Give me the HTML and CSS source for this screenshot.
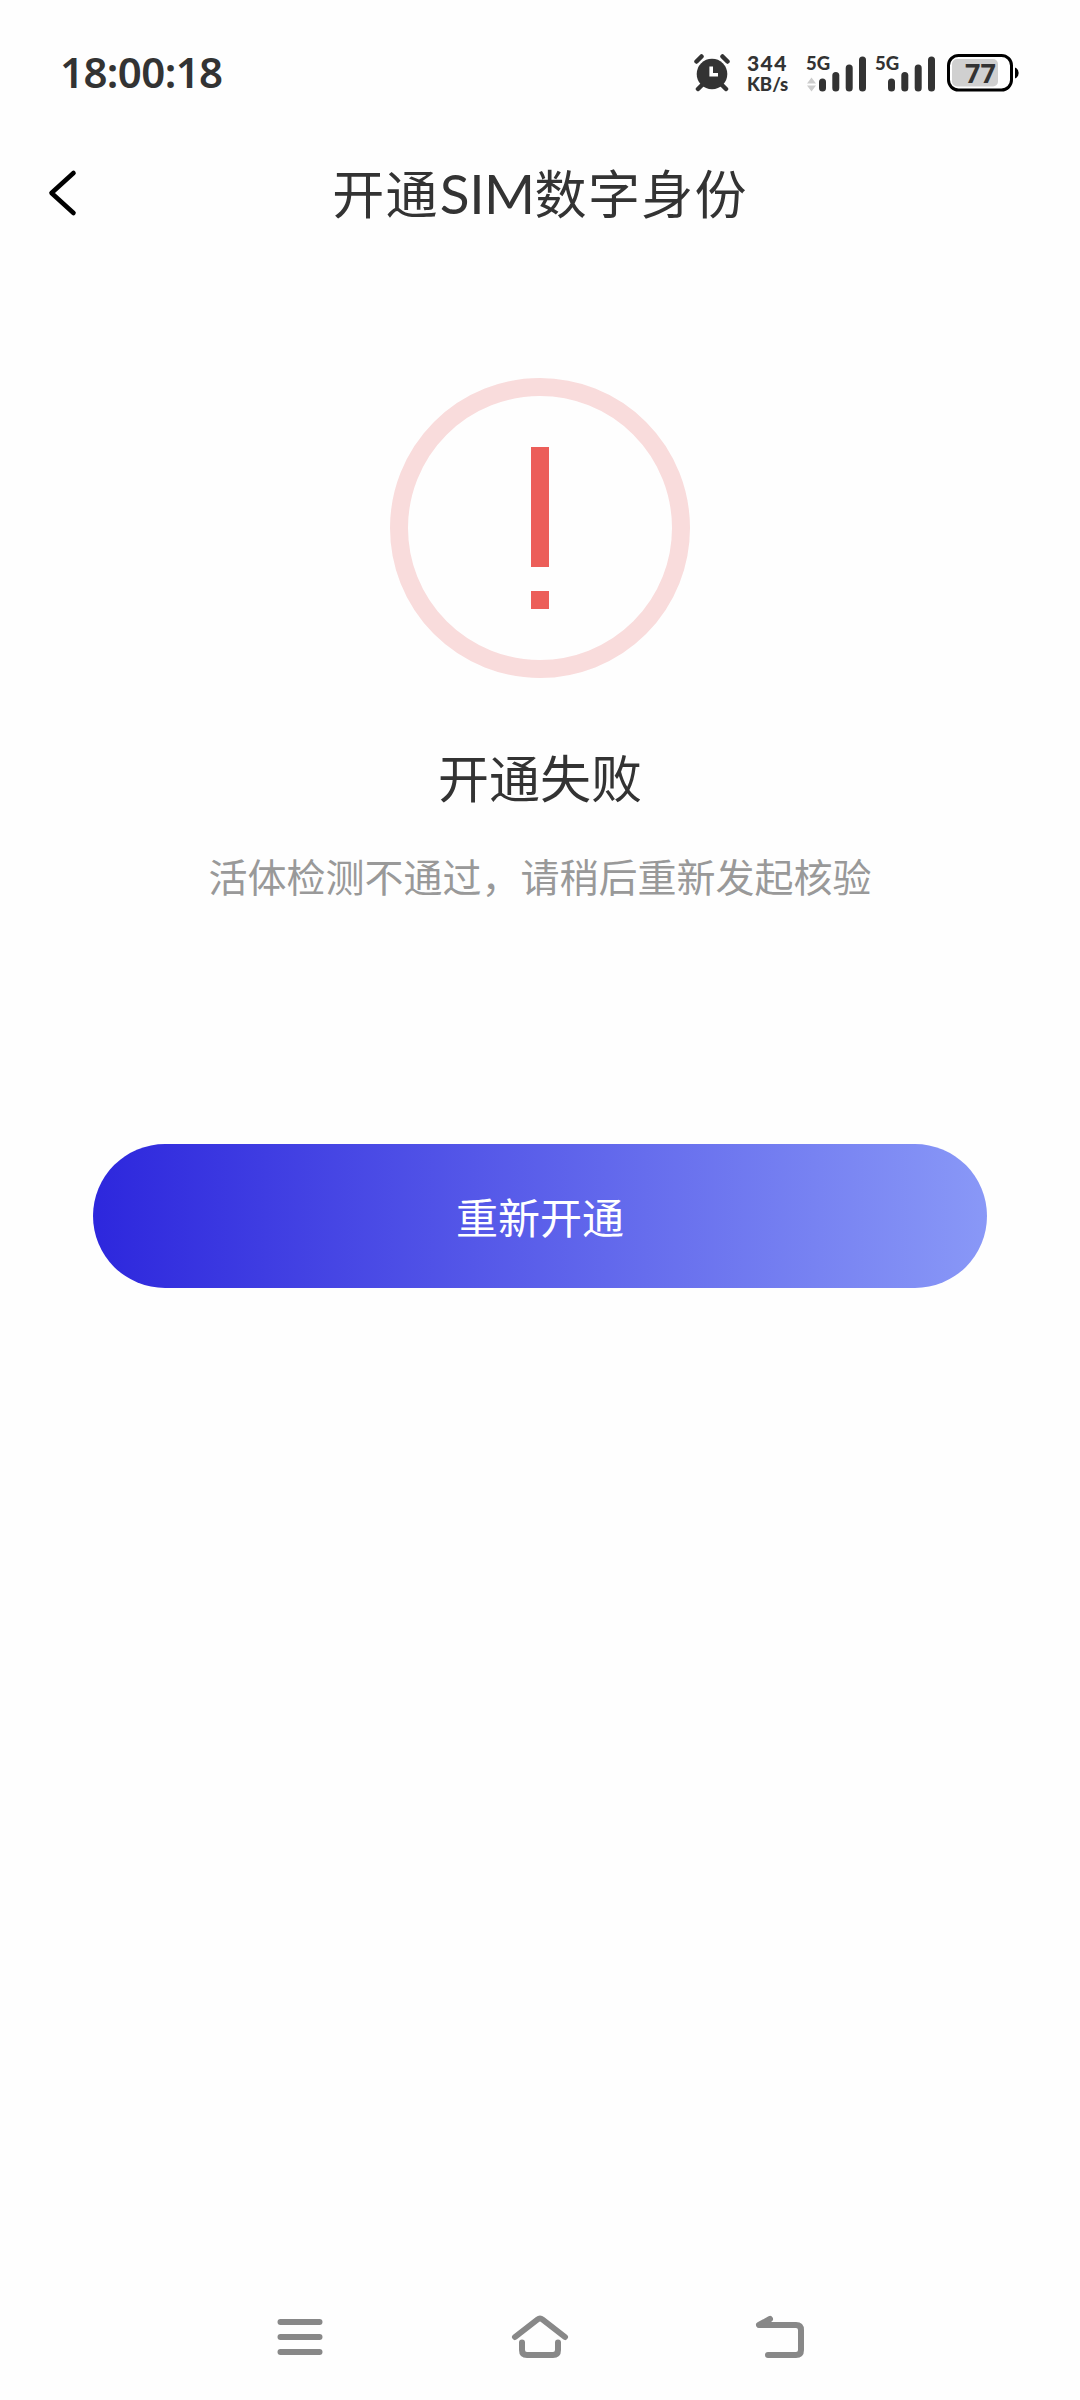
FILE: index.html
```
<!DOCTYPE html>
<html lang="zh-CN">
<head>
    <meta charset="UTF-8">
    <meta name="viewport" content="width=device-width, initial-scale=1.0">
    <title>开通SIM数字身份</title>
    <link rel="stylesheet" href="styles.css">
</head>
<body>
    <div class="status-bar">
        <div class="time">18:00:18</div>
        <div class="status-icons">
            <svg class="alarm" width="36" height="38" viewBox="0 0 36 38">
                <g stroke="#333" stroke-width="4.5" stroke-linecap="round">
                    <path d="M2.5 7.5L7.5 2.5M33.5 7.5L28.5 2.5M8 31L4 35M28 31L32 35"/>
                </g>
                <circle cx="18" cy="20" r="15.3" fill="#333"/>
                <path d="M17.2 12.5V20.8H24" fill="none" stroke="#fff" stroke-width="3.6"/>
            </svg>
            <div class="speed">
                <span class="speed-value">344</span>
                <span class="speed-unit">KB/s</span>
            </div>
            <div class="signal">
                <span class="network">5G</span>
                <svg width="60" height="38" viewBox="0 0 60 38">
                    <path d="M0 29.5L4.5 23.5L9 29.5ZM0 31.5L4.5 37.5L9 31.5Z" fill="#ccc"/>
                    <g fill="#333">
                        <rect x="12" y="24.5" width="7" height="13" rx="3.5"/>
                        <rect x="25.3" y="18" width="7" height="19.5" rx="3.5"/>
                        <rect x="38.7" y="10.5" width="7" height="27" rx="3.5"/>
                        <rect x="52" y="2.5" width="7" height="35" rx="3.5"/>
                    </g>
                </svg>
            </div>
            <div class="signal">
                <span class="network">5G</span>
                <svg width="60" height="38" viewBox="0 0 60 38">
                    <g fill="#333">
                        <rect x="12" y="24.5" width="7" height="13" rx="3.5"/>
                        <rect x="25.3" y="18" width="7" height="19.5" rx="3.5"/>
                        <rect x="38.7" y="10.5" width="7" height="27" rx="3.5"/>
                        <rect x="52" y="2.5" width="7" height="35" rx="3.5"/>
                    </g>
                </svg>
            </div>
            <div class="battery">
                <svg width="72" height="38" viewBox="0 0 72 38">
                    <rect x="1.5" y="1.5" width="63" height="34.5" rx="10" fill="#fff" stroke="#000" stroke-width="3"/>
                    <rect x="5" y="5" width="46" height="27.5" rx="5" fill="#d0d0d0"/>
                    <path d="M68 13.5Q71.7 15 71.7 19T68 24.5Z" fill="#000"/>
                </svg>
                <span class="battery-level">77</span>
            </div>
        </div>
    </div>

    <div class="header">
        <svg class="back" width="30" height="48" viewBox="0 0 30 48">
            <path d="M26.5 4L4.5 24L26.5 44" fill="none" stroke="#000" stroke-width="4.6" stroke-linecap="round" stroke-linejoin="round"/>
        </svg>
        <h1>开通<span class="latin">SIM</span>数字身份</h1>
    </div>

    <div class="result">
        <svg class="result-icon" width="300" height="300" viewBox="0 0 300 300">
            <circle cx="150" cy="150" r="141" fill="none" stroke="#f9dcdc" stroke-width="18"/>
            <rect x="141" y="69" width="18" height="120" fill="#ec5e59"/>
            <rect x="141" y="213" width="18" height="18" fill="#ec5e59"/>
        </svg>
        <h2>开通失败</h2>
        <p>活体检测不通过，请稍后重新发起核验</p>
        <button class="retry">重新开通</button>
    </div>

    <div class="nav-bar">
        <svg width="60" height="48" viewBox="0 0 60 48">
            <path d="M10.5 9H49.5M10.5 24H49.5M10.5 39H49.5"/>
        </svg>
        <svg width="60" height="48" viewBox="0 0 60 48">
            <path d="M5 24L27.5 6.5Q30 4.5 32.5 6.5L55 24M12 29.5V37Q12 42 17 42H43Q48 42 48 37V29.5"/>
        </svg>
        <svg width="60" height="48" viewBox="0 0 60 48">
            <path d="M20 6L9 12H46Q51 12 51 17V37Q51 42 46 42H18"/>
        </svg>
    </div>
</body>
</html>
```

FILE: styles.css
```
* {
    box-sizing: border-box;
}

body {
    margin: 0;
    height: 2400px;
    display: flex;
    flex-direction: column;
    background: #fefefe;
    color: #333;
    font-family: "Noto Sans CJK SC", sans-serif;
}

h1, h2, p {
    margin: 0;
    font-weight: 400;
}

svg {
    display: block;
}

.status-bar {
    height: 146px;
    padding: 0 61px 0 60px;
    display: flex;
    justify-content: space-between;
    align-items: center;
    font-family: Lato, "Noto Sans", sans-serif;
}

.time {
    padding-bottom: 2px;
    font-family: "Noto Sans", sans-serif;
    font-size: 42px;
    font-weight: 600;
    line-height: 60px;
    letter-spacing: -0.6px;
}

.status-icons {
    display: flex;
    height: 38px;
}

.alarm {
    margin-right: 17px;
}

.speed {
    width: 43px;
    margin-right: 17px;
    font-weight: 900;
    white-space: nowrap;
}

.speed span {
    display: block;
}

.speed-value {
    font-size: 21px;
    line-height: 17px;
    letter-spacing: 1.4px;
}

.speed-unit {
    margin-top: 3px;
    font-size: 18.5px;
    line-height: 20px;
}

.signal {
    position: relative;
    width: 60px;
    margin-right: 9px;
}

/* network label sits over the short bars */
.network {
    position: absolute;
    left: -1px;
    top: 0;
    font-size: 18.5px;
    font-weight: 900;
    line-height: 18px;
}

.battery {
    position: relative;
    margin-left: 2px;
}

.battery-level {
    position: absolute;
    left: 18px;
    top: 0;
    font-family: "Noto Sans", sans-serif;
    font-size: 27px;
    font-weight: 700;
    line-height: 38px;
}

.header {
    height: 94px;
    padding: 0 47px;
    display: grid;
    grid-template-columns: 30px 1fr 30px;
    align-items: center;
}

h1 {
    padding-bottom: 2px;
    font-size: 52px;
    line-height: 76px;
    letter-spacing: 1.3px;
    text-align: center;
}

.latin {
    margin-left: 1px;
    font-family: Lato, sans-serif;
    font-size: 55px;
    line-height: 1;
    letter-spacing: -0.5px;
}

.result {
    flex: 1;
    padding: 138px 93px 0;
    display: flex;
    flex-direction: column;
    align-items: center;
}

h2 {
    margin-top: 60px;
    font-size: 51px;
    line-height: 76px;
}

p {
    margin-top: 32px;
    color: #999;
    font-size: 39px;
    line-height: 58px;
}

.retry {
    width: 894px;
    height: 144px;
    margin-top: 240px;
    padding: 0 0 2px;
    border: none;
    border-radius: 72px;
    background: linear-gradient(90deg, #2d27dd, #8998f7);
    color: #fff;
    font-family: inherit;
    font-size: 42px;
}

.nav-bar {
    height: 87px;
    padding: 0 270px;
    display: flex;
    justify-content: space-between;
}

.nav-bar path {
    fill: none;
    stroke: #888;
    stroke-width: 6;
    stroke-linecap: round;
    stroke-linejoin: round;
}
```
